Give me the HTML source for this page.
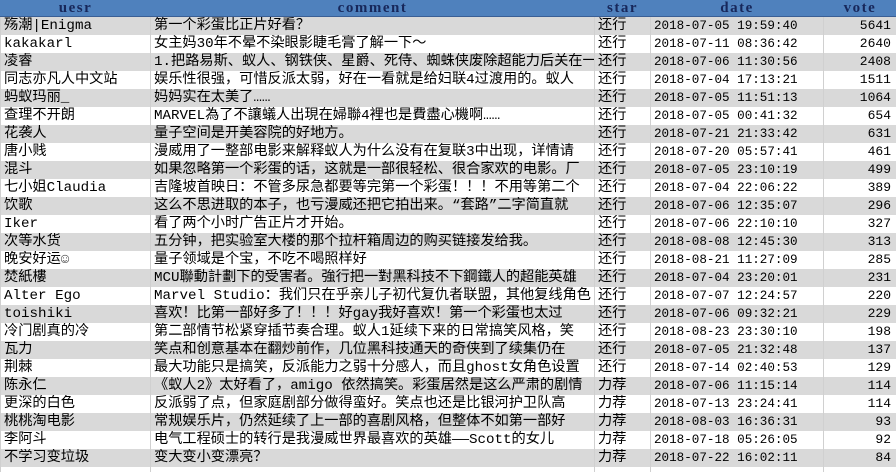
<!DOCTYPE html>
<html><head><meta charset="utf-8"><style>
html,body{margin:0;padding:0;background:#fff;width:896px;height:472px;overflow:hidden}
table{width:896px;border-collapse:collapse;table-layout:fixed;font-family:"Liberation Mono","Noto Sans CJK SC",monospace;font-size:14.2px;color:#000}
td,th{padding:0 0 0 3px;white-space:nowrap;overflow:hidden;height:18px;line-height:18px;border-left:1px solid #d0d0d0;border-right:1px solid #d0d0d0}
th{background:#4f81bd;color:#17275a;font-family:"Liberation Serif",serif;font-weight:bold;letter-spacing:1.5px;height:16px;line-height:16px;font-size:15px;text-align:center;padding:0;border-color:#4f81bd;border-bottom:1px solid #3a5f95}
tr:nth-child(even) td{background:#d9d9d9}
td.d{font-size:12.6px}
td.v{text-align:right;padding-right:5px;font-size:13px}
</style></head><body>
<table>
<colgroup><col style="width:150px"><col style="width:444px"><col style="width:56px"><col style="width:173px"><col style="width:73px"></colgroup>
<tr><th>uesr</th><th>comment</th><th>star</th><th>date</th><th>vote</th></tr>
<tr><td>殇潮|Enigma</td><td>第一个彩蛋比正片好看？</td><td>还行</td><td class="d">2018-07-05 19:59:40</td><td class="v">5641</td></tr>
<tr><td>kakakarl</td><td>女主妈30年不晕不染眼影睫毛膏了解一下～</td><td>还行</td><td class="d">2018-07-11 08:36:42</td><td class="v">2640</td></tr>
<tr><td>凌睿</td><td>1.把路易斯、蚁人、钢铁侠、星爵、死侍、蜘蛛侠废除超能力后关在一起</td><td>还行</td><td class="d">2018-07-06 11:30:56</td><td class="v">2408</td></tr>
<tr><td>同志亦凡人中文站</td><td>娱乐性很强，可惜反派太弱，好在一看就是给妇联4过渡用的。蚁人</td><td>还行</td><td class="d">2018-07-04 17:13:21</td><td class="v">1511</td></tr>
<tr><td>蚂蚁玛丽_</td><td>妈妈实在太美了……</td><td>还行</td><td class="d">2018-07-05 11:51:13</td><td class="v">1064</td></tr>
<tr><td>查理不开朗</td><td>MARVEL為了不讓蟻人出現在婦聯4裡也是費盡心機啊……</td><td>还行</td><td class="d">2018-07-05 00:41:32</td><td class="v">654</td></tr>
<tr><td>花袭人</td><td>量子空间是开美容院的好地方。</td><td>还行</td><td class="d">2018-07-21 21:33:42</td><td class="v">631</td></tr>
<tr><td>唐小贱</td><td>漫威用了一整部电影来解释蚁人为什么没有在复联3中出现，详情请</td><td>还行</td><td class="d">2018-07-20 05:57:41</td><td class="v">461</td></tr>
<tr><td>混斗</td><td>如果忽略第一个彩蛋的话，这就是一部很轻松、很合家欢的电影。厂</td><td>还行</td><td class="d">2018-07-05 23:10:19</td><td class="v">499</td></tr>
<tr><td>七小姐Claudia</td><td>吉隆坡首映日：不管多尿急都要等完第一个彩蛋！！！不用等第二个</td><td>还行</td><td class="d">2018-07-04 22:06:22</td><td class="v">389</td></tr>
<tr><td>饮歌</td><td>这么不思进取的本子，也亏漫威还把它拍出来。“套路”二字简直就</td><td>还行</td><td class="d">2018-07-06 12:35:07</td><td class="v">296</td></tr>
<tr><td>Iker</td><td>看了两个小时广告正片才开始。</td><td>还行</td><td class="d">2018-07-06 22:10:10</td><td class="v">327</td></tr>
<tr><td>次等水货</td><td>五分钟，把实验室大楼的那个拉杆箱周边的购买链接发给我。</td><td>还行</td><td class="d">2018-08-08 12:45:30</td><td class="v">313</td></tr>
<tr><td>晚安好运☺</td><td>量子领域是个宝，不吃不喝照样好</td><td>还行</td><td class="d">2018-08-21 11:27:09</td><td class="v">285</td></tr>
<tr><td>焚紙樓</td><td>MCU聯動計劃下的受害者。強行把一對黑科技不下鋼鐵人的超能英雄</td><td>还行</td><td class="d">2018-07-04 23:20:01</td><td class="v">231</td></tr>
<tr><td>Alter Ego</td><td>Marvel Studio：我们只在乎亲儿子初代复仇者联盟，其他复线角色</td><td>还行</td><td class="d">2018-07-07 12:24:57</td><td class="v">220</td></tr>
<tr><td>toishiki</td><td>喜欢！比第一部好多了！！！好gay我好喜欢！第一个彩蛋也太过</td><td>还行</td><td class="d">2018-07-06 09:32:21</td><td class="v">229</td></tr>
<tr><td>冷门剧真的冷</td><td>第二部情节松紧穿插节奏合理。蚁人1延续下来的日常搞笑风格，笑</td><td>还行</td><td class="d">2018-08-23 23:30:10</td><td class="v">198</td></tr>
<tr><td>瓦力</td><td>笑点和创意基本在翻炒前作，几位黑科技通天的奇侠到了续集仍在</td><td>还行</td><td class="d">2018-07-05 21:32:48</td><td class="v">137</td></tr>
<tr><td>荆棘</td><td>最大功能只是搞笑，反派能力之弱十分感人，而且ghost女角色设置</td><td>还行</td><td class="d">2018-07-14 02:40:53</td><td class="v">129</td></tr>
<tr><td>陈永仁</td><td>《蚁人2》太好看了，amigo 依然搞笑。彩蛋居然是这么严肃的剧情</td><td>力荐</td><td class="d">2018-07-06 11:15:14</td><td class="v">114</td></tr>
<tr><td>更深的白色</td><td>反派弱了点，但家庭剧部分做得蛮好。笑点也还是比银河护卫队高</td><td>力荐</td><td class="d">2018-07-13 23:24:41</td><td class="v">114</td></tr>
<tr><td>桃桃淘电影</td><td>常规娱乐片，仍然延续了上一部的喜剧风格，但整体不如第一部好</td><td>力荐</td><td class="d">2018-08-03 16:36:31</td><td class="v">93</td></tr>
<tr><td>李阿斗</td><td>电气工程硕士的转行是我漫威世界最喜欢的英雄——Scott的女儿</td><td>力荐</td><td class="d">2018-07-18 05:26:05</td><td class="v">92</td></tr>
<tr><td>不学习变垃圾</td><td>变大变小变漂亮？</td><td>力荐</td><td class="d">2018-07-22 16:02:11</td><td class="v">84</td></tr>
<tr><td></td><td></td><td></td><td class="d"></td><td class="v"></td></tr>
</table>
</body></html>
